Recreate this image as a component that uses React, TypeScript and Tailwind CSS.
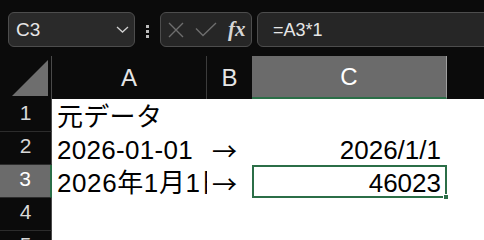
import React from 'react';

const FONT = '"Liberation Sans", "Noto Sans CJK JP", sans-serif';
const CJK = '"Noto Sans CJK JP", sans-serif';

type Row = { n: number; a?: string; b?: string; c?: string };

const ROWS: Row[] = [
  { n: 1, a: '元データ' },
  { n: 2, a: '2026-01-01', b: '→', c: '2026/1/1' },
  { n: 3, a: '2026年1月1日', b: '→', c: '46023' },
  { n: 4 },
  { n: 5 },
];

const SELECTED_ROW = 3;

const Chevron = () => (
  <svg width="13" height="7" viewBox="0 0 13 7" fill="none">
    <path d="M1 1l5.5 5L12 1" stroke="#cfcfcf" strokeWidth="1.3" />
  </svg>
);

const CancelIcon = () => (
  <svg width="16" height="16" viewBox="0 0 16 16" fill="none">
    <path d="M1 1l14 14M15 1L1 15" stroke="#6e6e6e" strokeWidth="1.4" />
  </svg>
);

const EnterIcon = () => (
  <svg width="22" height="15" viewBox="0 0 22 15" fill="none">
    <path d="M1 6.5l7 7L21 1" stroke="#6e6e6e" strokeWidth="1.4" />
  </svg>
);

export default function App() {
  return (
    <div className="w-[484px] h-[240px] overflow-hidden bg-[#0b0b0b]" style={{ fontFamily: FONT }}>
      {/* name box + formula bar */}
      <div className="flex items-start h-[56px] pt-[12px] pl-[8px]">
        <div className="w-[127px] h-[35px] shrink-0 rounded-[6px] border border-[#4d4d4d] bg-[#2a2a2a] flex items-center justify-between pl-[7px] pr-[5px]">
          <span className="text-[19px] text-[#e6e6e6] leading-none">C3</span>
          <Chevron />
        </div>
        <div className="ml-[11px] mt-[13px] flex flex-col gap-[2px] shrink-0">
          <span className="w-[3px] h-[3px] bg-[#bdbdbd]" />
          <span className="w-[3px] h-[3px] bg-[#bdbdbd]" />
          <span className="w-[3px] h-[3px] bg-[#bdbdbd]" />
        </div>
        <div className="ml-[11px] w-[92px] h-[35px] shrink-0 rounded-[6px] border border-[#4d4d4d] bg-[#262626] flex items-center pl-[7px]">
          <CancelIcon />
          <span className="ml-[11px]"><EnterIcon /></span>
          <span
            className="ml-[11px] text-[21px] italic font-bold text-[#d6d6d6] leading-none"
            style={{ fontFamily: '"Liberation Serif", "DejaVu Serif", serif' }}
          >
            fx
          </span>
        </div>
        <div className="ml-[5px] w-[260px] h-[35px] shrink-0 rounded-[6px] border border-[#4d4d4d] bg-[#262626] flex items-center pl-[15px]">
          <span className="text-[18px] text-[#e6e6e6] leading-none">=A3*1</span>
        </div>
      </div>

      {/* column headers */}
      <div className="flex h-[43px]">
        <div className="w-[52px] shrink-0 border-r border-[#4a4a4a] relative">
          <svg className="absolute left-[12px] top-[4px]" width="36" height="36" viewBox="0 0 36 36">
            <path d="M0 36L36 36L36 0Z" fill="#6e6e6e" />
          </svg>
        </div>
        <div className="w-[155px] shrink-0 border-r border-[#3c3c3c] flex items-center justify-center text-[24px] text-[#e6e6e6]">
          A
        </div>
        <div className="w-[45px] shrink-0 flex items-center justify-center text-[24px] text-[#e6e6e6]">
          B
        </div>
        <div className="w-[195px] shrink-0 bg-[#6b6b6b] border-r border-[#a0a0a0] border-b-2 border-b-[#2b6e47] flex items-center justify-center text-[24px] text-white">
          C
        </div>
        <div className="flex-1" />
      </div>

      {/* rows */}
      {ROWS.map((r) => {
        const sel = r.n === SELECTED_ROW;
        return (
          <div key={r.n} className="flex h-[33px]">
            <div
              className={`w-[52px] shrink-0 flex justify-center pt-[1px] text-[21px] leading-[26px] border-b border-[#2c2c2c] ${
                sel
                  ? 'bg-[#6b6b6b] text-white border-r-2 border-r-[#2b6e47]'
                  : 'bg-[#0b0b0b] text-[#d8d8d8] border-r border-r-[#4a4a4a]'
              }`}
            >
              {r.n}
            </div>
            <div
              className={`w-[155px] shrink-0 bg-white overflow-hidden whitespace-nowrap pl-[5px] text-[26px] leading-[36px] text-black ${
                sel ? 'tracking-[0.6px]' : 'tracking-[0.3px]'
              }`}
            >
              {r.a}
            </div>
            <div
              className="w-[45px] shrink-0 bg-white overflow-hidden whitespace-nowrap pl-[5px] text-[25px] leading-[36px] text-black"
              style={{ fontFamily: CJK }}
            >
              {r.b}
            </div>
            {sel ? (
              <div className="w-[195px] shrink-0 bg-white border-2 border-[#2b6e47] relative text-right pr-[4px] text-[26px] leading-[32px] text-black">
                {r.c}
                <span className="absolute right-[-4px] bottom-[-4px] w-[6px] h-[6px] bg-[#2b6e47] border border-white" />
              </div>
            ) : (
              <div className="w-[195px] shrink-0 bg-white overflow-hidden text-right pr-[6px] text-[26px] leading-[36px] text-black">
                {r.c}
              </div>
            )}
            <div className="flex-1 bg-white" />
          </div>
        );
      })}
    </div>
  );
}
